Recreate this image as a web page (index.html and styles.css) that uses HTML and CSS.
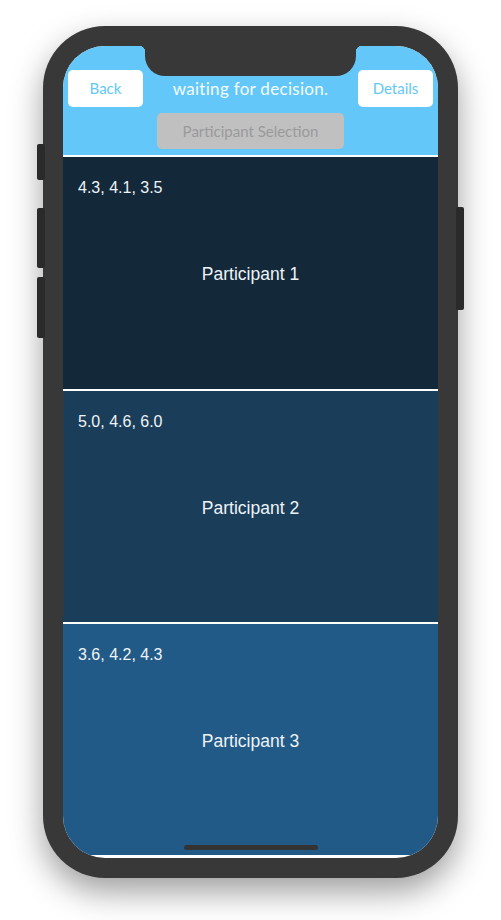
FILE: index.html
```html
<!DOCTYPE html>
<html>
<head>
<meta charset="utf-8">
<link rel="stylesheet" href="styles.css">
</head>
<body>
<div class="stage">
  <div class="phone">
    <span class="side side-mute"></span>
    <span class="side side-vol-up"></span>
    <span class="side side-vol-down"></span>
    <span class="side side-power"></span>
    <div class="screen">
      <div class="notch"></div>
      <header class="header">
        <div class="top-row">
          <button class="btn">Back</button>
          <div class="title">waiting for decision.</div>
          <button class="btn">Details</button>
        </div>
        <button class="select-btn">Participant Selection</button>
      </header>
      <section class="cell cell-1">
        <div class="scores">4.3, 4.1, 3.5</div>
        <div class="name">Participant 1</div>
      </section>
      <section class="cell cell-2">
        <div class="scores">5.0, 4.6, 6.0</div>
        <div class="name">Participant 2</div>
      </section>
      <section class="cell cell-3">
        <div class="scores">3.6, 4.2, 4.3</div>
        <div class="name">Participant 3</div>
      </section>
      <div class="home-indicator"></div>
    </div>
  </div>
</div>
</body>
</html>
```
FILE: styles.css
```css
html, body {
  margin: 0;
  padding: 0;
  background: #ffffff;
}
.stage {
  padding: 26px 0 42px 43px;
  min-height: 852px;
}
.phone {
  position: relative;
  width: 375px;
  height: 812px;
  padding: 20px;
  background: #383838;
  border-radius: 62px;
  box-shadow: 0 14px 32px rgba(0, 0, 0, 0.38);
}
.side {
  position: absolute;
  width: 8px;
  background: #2a2a2a;
  border-radius: 2px;
}
.side-mute { left: -6px; top: 118px; height: 36px; }
.side-vol-up { left: -6px; top: 182px; height: 60px; }
.side-vol-down { left: -6px; top: 251px; height: 61px; }
.side-power { right: -6px; top: 181px; height: 103px; }
.screen {
  position: relative;
  width: 375px;
  height: 812px;
  border-radius: 42px;
  overflow: hidden;
  background: #ffffff;
  display: flex;
  flex-direction: column;
  gap: 2px;
}
.notch {
  position: absolute;
  left: 82px;
  top: 0;
  width: 211px;
  height: 30px;
  background: #383838;
  border-radius: 0 0 20px 20px;
}
.notch::before, .notch::after {
  content: "";
  position: absolute;
  top: 0;
  width: 6px;
  height: 6px;
}
.notch::before {
  left: -6px;
  background: radial-gradient(circle at 0 100%, transparent 6px, #383838 6.5px);
}
.notch::after {
  right: -6px;
  background: radial-gradient(circle at 100% 100%, transparent 6px, #383838 6.5px);
}
.header {
  height: 109px;
  box-sizing: border-box;
  background: #63c8f9;
  padding: 24px 5px 0;
  display: flex;
  flex-direction: column;
  align-items: center;
  flex-shrink: 0;
}
.top-row {
  width: 100%;
  display: flex;
  align-items: center;
  justify-content: space-between;
}
.btn {
  width: 75px;
  height: 37px;
  border: 0;
  border-radius: 5px;
  background: #ffffff;
  color: #62c8f8;
  font-family: Lato, "Open Sans", sans-serif;
  font-size: 15px;
  padding: 0 0 2px;
}
.title {
  color: #f4fbff;
  font-family: Lato, "Open Sans", sans-serif;
  font-size: 17px;
  letter-spacing: 0.3px;
  padding-bottom: 1px;
}
.select-btn {
  margin-top: 6px;
  width: 187px;
  height: 36px;
  border: 0;
  border-radius: 5px;
  background: #c0c0c0;
  color: #9a9a9a;
  font-family: Lato, "Open Sans", sans-serif;
  font-size: 15px;
  padding: 0;
}
.cell {
  height: 232px;
  flex-shrink: 0;
  position: relative;
  box-sizing: border-box;
  padding: 22px 15px 0;
  color: #eef3f7;
  font-family: "Liberation Sans", Arial, sans-serif;
  display: flex;
  flex-direction: column;
}
.cell-1 { background: #13293a; }
.cell-2 { background: #1a3d5a; height: 231px; }
.cell-3 { background: #225a87; height: 231px; }
.scores {
  font-size: 16px;
  line-height: 18px;
}
.name {
  font-size: 17.5px;
  text-align: center;
  margin-top: 67px;
}
.home-indicator {
  position: absolute;
  left: 121px;
  bottom: 8px;
  width: 134px;
  height: 5px;
  border-radius: 3px;
  background: #333333;
}
```
